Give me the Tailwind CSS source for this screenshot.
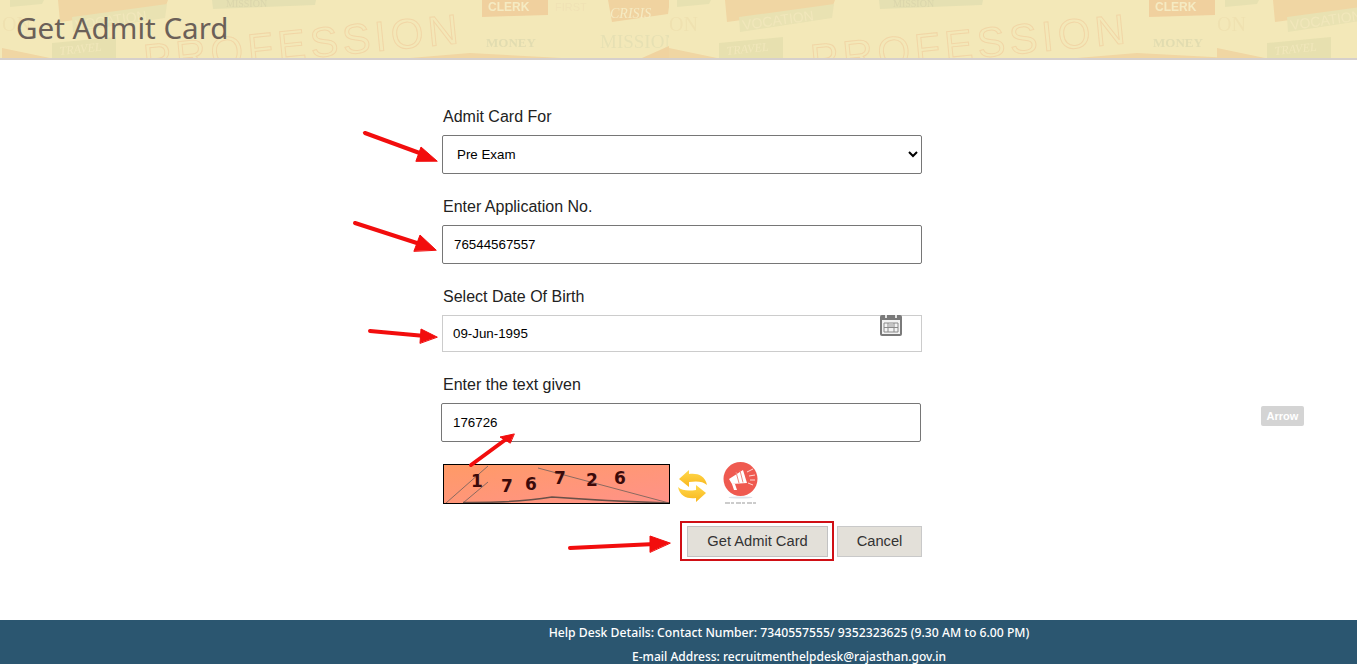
<!DOCTYPE html>
<html lang="en">
<head>
    <meta charset="UTF-8">
    <meta name="viewport" content="width=device-width, initial-scale=1.0">
    <title>Get Admit Card</title>
    <script src="https://cdn.jsdelivr.net/npm/@tailwindcss/browser@4"></script>
</head>
<body class="relative h-screen overflow-hidden bg-white flex flex-col font-['Liberation_Sans',sans-serif]">

    <!-- Shared gradient for the refresh icon -->
    <svg class="absolute" width="0" height="0" aria-hidden="true">
        <defs>
            <linearGradient id="arrow-top" x1="0" y1="0" x2="0" y2="1">
                <stop offset="0" stop-color="#ffd94d"/>
                <stop offset="1" stop-color="#f9b61c"/>
            </linearGradient>
        </defs>
    </svg>

    <!-- Banner -->
    <header class="relative h-[60px] shrink-0 border-b-2 border-[#d6d0cc] bg-[#f3e8b8] overflow-hidden">
        <svg class="absolute inset-0 opacity-75 blur-[0.6px]" width="1357" height="58" aria-hidden="true">
            <defs>
                <g id="collage">
                    <path d="M8 0h34l-2 4-32 3z" fill="#e3dfaf"/>
                    <path d="M56 0h110l-3 8-105 14z" fill="#f0d09c"/>
                    <path d="M70 17l95-13-2 14-92 14z" fill="#e6e0b0"/>
                    <text x="74" y="30" transform="rotate(-8 74 30)" font-family="Liberation Sans" font-size="14" fill="#f1e7bc">VOCATION</text>
                    <path d="M210 0h104l-1 5-102 4z" fill="#e1deb0"/>
                    <text x="224" y="7" font-family="Liberation Serif" font-size="10" fill="#d3d0a8">MISSION</text>
                    <path d="M0 48l48 10h-48z" fill="#f0d09c"/>
                    <path d="M50 43l64-6v21h-64z" fill="#e3deac"/>
                    <text x="58" y="55" transform="rotate(-6 58 55)" font-family="Liberation Serif" font-size="12" font-style="italic" fill="#f1e7bc">TRAVEL</text>
                    <text x="0" y="31" font-family="Liberation Serif" font-size="20" fill="#eedfae">ON</text>
                    <text x="143" y="74" transform="rotate(-5.600 143 74)" font-family="Liberation Sans" font-size="42" letter-spacing="4.500" fill="none" stroke="#f1d0a0" stroke-width="1">PROFESSION</text>
                    <path d="M408 58l60-5 92 5z" fill="#f1d09c"/>
                    <path d="M480 0h66v15l-66 2z" fill="#f0c896"/>
                    <text x="486" y="11" font-family="Liberation Sans" font-size="12" font-weight="700" fill="#f6ecc6">CLERK</text>
                    <text x="553" y="11" font-family="Liberation Sans" font-size="11" fill="#efe0b4">FIRST</text>
                    <text x="484" y="47" font-family="Liberation Serif" font-size="13" font-weight="700" fill="#dcd8ae">MONEY</text>
                    <path d="M606 0h62l-2 14-56 8z" fill="#f0cc98"/>
                    <text x="608" y="18" font-family="Liberation Serif" font-size="14" font-style="italic" fill="#f6ecc6">CRISIS</text>
                    <text x="598" y="48" font-family="Liberation Serif" font-size="19" fill="#e2deb2">MISSION</text>
                    <path d="M640 58l27-12v12z" fill="#f0cc98"/>
                </g>
                <clipPath id="clip-a"><rect width="667" height="58"/></clipPath>
                <clipPath id="clip-b"><rect width="548" height="58"/></clipPath>
            </defs>
            <g transform="translate(2 0)" clip-path="url(#clip-a)"><use href="#collage"/></g>
            <g transform="translate(669 0)" clip-path="url(#clip-b)"><use href="#collage"/></g>
            <g transform="translate(1217 0)"><use href="#collage"/></g>
        </svg>
        <h1 class="relative pl-4 pt-[8px] text-[29.600px] leading-[40px] text-[#6b6058] font-['Noto_Sans',sans-serif]">Get Admit Card</h1>
    </header>

    <!-- Form -->
    <main class="flex-1 ml-[442px] w-[480px] pt-[45px] text-[#222]">
        <label class="block pl-[1px] text-base leading-6 mb-[6px]">Admit Card For</label>
        <select class="block w-full h-[39px] pl-[10px] bg-white border border-[#767676] rounded-[2px] text-[13.330px] text-black">
            <option>Pre Exam</option>
        </select>

        <label class="block pl-[1px] mt-[21px] text-base leading-6 mb-[6px]">Enter Application No.</label>
        <input type="text" value="76544567557" class="block w-full h-[39px] px-[11px] border border-[#767676] rounded-[2px] text-[13.330px] text-black">

        <label class="block pl-[1px] mt-[21px] text-base leading-6 mb-[6px]">Select Date Of Birth</label>
        <div class="relative h-[37px]">
            <input type="text" value="09-Jun-1995" class="block w-full h-full px-[10px] border border-[#cccccc] text-[13.330px] text-black">
            <svg class="absolute right-[20px] top-0" width="22" height="21" viewBox="0 0 22 21" aria-hidden="true">
                <rect x="0" y="0" width="22" height="21" rx="2" fill="#7a7a7a"/>
                <rect x="5" y="0" width="2" height="3" fill="#e4e4e4"/>
                <rect x="15" y="0" width="2" height="3" fill="#e4e4e4"/>
                <rect x="2" y="5" width="18" height="14" fill="#f2f2f2"/>
                <path d="M4 8h14v9h-14zM4 12.500h14M8 8v9M14 8v9" stroke="#8a8a8a" stroke-width="1" fill="none"/>
                <rect x="9" y="9" width="4" height="3" fill="#c4c4c4"/>
            </svg>
        </div>

        <label class="block pl-[1px] mt-[21px] text-base leading-6 mb-[6px]">Enter the text given</label>
        <input type="text" value="176726" class="block -ml-[1px] w-full h-[39px] px-[11px] border border-[#767676] rounded-[2px] text-[13.330px] text-black">

        <div class="flex items-start mt-5">
            <!-- Captcha -->
            <div class="relative ml-[1px] mt-[2px] w-[227px] h-[40px] border border-black bg-gradient-to-br from-[#ff9a66] to-[#ff9288] overflow-hidden font-['DejaVu_Sans',sans-serif] font-bold text-[17px] leading-none text-[#3b0a0a]">
                <svg class="absolute inset-0" width="225" height="38" aria-hidden="true">
                    <path d="M2 38L44 1M19 38L44 17M94 3L225 38" stroke="#8a6a60" stroke-width="1" fill="none"/>
                    <path d="M19 37.500Q70 38 108 32Q160 36 225 38" stroke="#6a5048" stroke-width="1.500" fill="none"/>
                </svg>
                <span class="absolute left-[27px] top-[8px]">1</span>
                <span class="absolute left-[57px] top-[13px]">7</span>
                <span class="absolute left-[81px] top-[11px]">6</span>
                <span class="absolute left-[110px] top-[5px]">7</span>
                <span class="absolute left-[142px] top-[7px]">2</span>
                <span class="absolute left-[170px] top-[5px]">6</span>
            </div>
            <!-- Refresh -->
            <svg class="ml-[8px] mt-[8px]" width="30" height="33" viewBox="0 0 30 33" aria-hidden="true">
                <path d="M1 9L11 0V4C19 3 27 5 29 15C25 11 18 11 11 12V17Z" fill="url(#arrow-top)"/>
                <path d="M28 23L18 32V28C10 29 2 27 0 17C4 21 11 21 18 20V15Z" fill="url(#arrow-top)"/>
            </svg>
            <!-- Audio -->
            <svg class="ml-[15px]" width="35" height="44" viewBox="0 0 35 44" aria-hidden="true">
                <ellipse cx="17.500" cy="35.500" rx="12" ry="1" fill="#dde3ea"/>
                <circle cx="17.500" cy="17" r="17" fill="#ef5a50"/>
                <path d="M6 17l14-9 4 13-15 1z" fill="#fff"/>
                <path d="M13 10l3 11M17 8.500l3 12" stroke="#ef8a80" stroke-width="1"/>
                <path d="M9 22l2 6h3l-2-6z" fill="#fff"/>
                <path d="M24 10l6-3M26 14l6-1M27 18h5M25 21l5 2" stroke="#ffd9d4" stroke-width="1"/>
                <path d="M2 41h31" stroke="#999" stroke-width="1" stroke-dasharray="5 1 3 2"/>
            </svg>
        </div>

        <div class="flex justify-end items-start mt-[15px]">
            <div class="border-2 border-[#d00f15] pl-[5px] pr-[4px] pt-[3px] pb-[2px] mr-[3px]">
                <button class="block w-[141px] h-[31px] bg-[#e3e0d9] border border-[#c2c2c2] text-[14.700px] text-[#333]">Get Admit Card</button>
            </div>
            <button class="block mt-[5px] w-[85px] h-[31px] bg-[#e3e0d9] border border-[#c9c9c9] text-[14.700px] text-[#333]">Cancel</button>
        </div>
    </main>

    <!-- Help desk -->
    <footer class="shrink-0 h-[44px] overflow-visible bg-[#2b5670] pt-[1px] pl-[221px] text-center text-[12.200px] leading-6 font-medium text-white font-['Noto_Sans',sans-serif]">
        <p>Help Desk Details: Contact Number: 7340557555/ 9352323625 (9.30 AM to 6.00 PM)</p>
        <p class="text-[12px]">E-mail Address: recruitmenthelpdesk@rajasthan.gov.in</p>
    </footer>

    <!-- Floating badge -->
    <span class="absolute left-[1261px] top-[406px] w-[43px] h-[20px] rounded-[2px] bg-[#d4d4d4] text-center text-[11px] leading-5 font-bold text-white">Arrow</span>

    <!-- Annotation arrows -->
    <svg class="absolute inset-0 pointer-events-none" width="1357" height="664" aria-hidden="true">
        <g fill="#f20d0d" stroke="#f20d0d" stroke-linecap="round">
            <path d="M365 133L425 155" stroke-width="4" fill="none"/>
            <path d="M437 161L421 147L416 161Z" stroke-width="1"/>
            <path d="M355 223L423 245" stroke-width="4" fill="none"/>
            <path d="M436 250L420 235L414 251Z" stroke-width="1"/>
            <path d="M370 331L425 336" stroke-width="4" fill="none"/>
            <path d="M437 337L421 329L420 343Z" stroke-width="1"/>
            <path d="M471 465L505 440" stroke-width="4" fill="none"/>
            <path d="M514 434L500 437L510 443Z" stroke-width="1"/>
            <path d="M570 548L655 544" stroke-width="4" fill="none"/>
            <path d="M670 543L650 536L650 552Z" stroke-width="1"/>
        </g>
    </svg>
</body>
</html>
